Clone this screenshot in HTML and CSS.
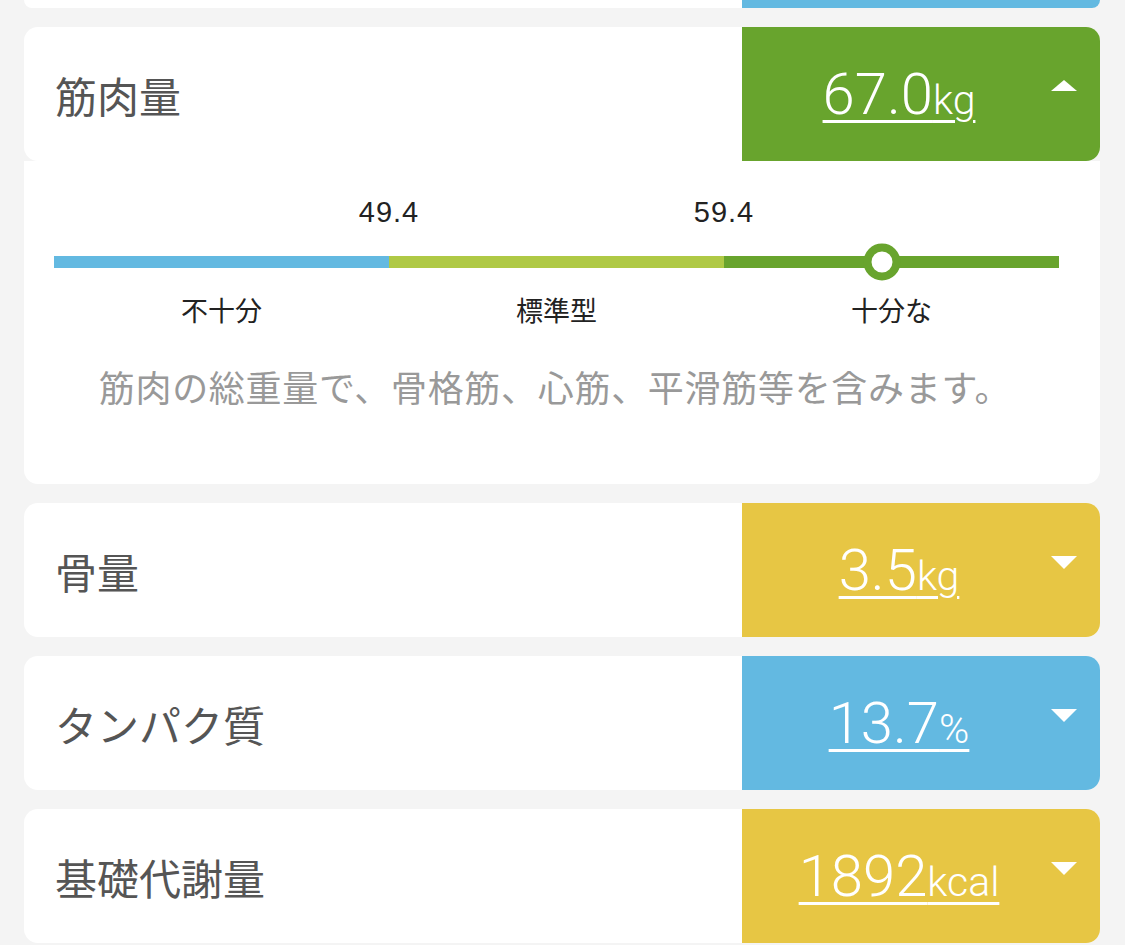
FILE: index.html
```html
<!DOCTYPE html>
<html lang="ja">
<head>
  <meta charset="UTF-8">
  <meta name="viewport" content="width=device-width, initial-scale=1.0">
  <title>体組成</title>
  <link rel="stylesheet" href="styles.css">
</head>
<body>
  <div id="list">
    <!-- bottom edge of the card scrolled above -->
    <div class="card tail">
      <div></div>
      <div class="panel blue"></div>
    </div>

    <div class="group">
      <div class="card">
        <div class="label">筋肉量</div>
        <div class="panel green">
          <span class="value"><span class="num">67.0</span><span class="unit">kg</span></span>
          <span class="arrow up"></span>
        </div>
      </div>
      <div class="detail">
        <div class="scale">
          <div class="limits">
            <span class="limit">49.4</span>
            <span class="limit">59.4</span>
          </div>
          <div class="bar">
            <span class="seg blue"></span>
            <span class="seg lime"></span>
            <span class="seg green"></span>
            <span class="marker" style="left: 82.4%;"></span>
          </div>
          <div class="ranges">
            <span>不十分</span>
            <span>標準型</span>
            <span>十分な</span>
          </div>
        </div>
        <p class="desc">筋肉の総重量で、骨格筋、心筋、平滑筋等を含みます。</p>
      </div>
    </div>

    <div class="card">
      <div class="label">骨量</div>
      <div class="panel yellow">
        <span class="value"><span class="num">3.5</span><span class="unit">kg</span></span>
        <span class="arrow down"></span>
      </div>
    </div>

    <div class="card">
      <div class="label">タンパク質</div>
      <div class="panel blue">
        <span class="value"><span class="num">13.7</span><span class="unit">%</span></span>
        <span class="arrow down"></span>
      </div>
    </div>

    <div class="card">
      <div class="label">基礎代謝量</div>
      <div class="panel yellow">
        <span class="value"><span class="num">1892</span><span class="unit">kcal</span></span>
        <span class="arrow down"></span>
      </div>
    </div>
  </div>
</body>
</html>
```

FILE: styles.css
```css
body {
  background-color: #f4f4f4;
  margin: 0;
  padding: 0;
  font-family: 'Noto Sans CJK JP', sans-serif;
}
#list {
  display: flex;
  flex-direction: column;
  gap: 19px;
  margin: 0 25px 0 24px;
}
.card {
  display: grid;
  grid-template-columns: 1fr 358px;
  height: 134px;
  background-color: #ffffff;
  border-radius: 14px;
  overflow: hidden;
}
.card.tail {
  height: 8px;
  border-radius: 0 0 14px 14px;
}
.label {
  display: flex;
  align-items: center;
  padding-left: 31px;
  font-size: 42px;
  color: #555555;
}
.panel {
  display: flex;
  align-items: center;
  padding: 0 23px 0 5px;
  color: #ffffff;
}
.panel.green { background-color: #68a42d; }
.panel.blue { background-color: #63b9e1; }
.panel.yellow { background-color: #e7c644; }
.value {
  flex: 1;
  text-align: center;
  font-family: 'Roboto', 'Liberation Sans', sans-serif;
  font-weight: 300;
  text-decoration: underline;
  text-decoration-thickness: 3px;
  text-underline-offset: 6px;
  white-space: nowrap;
}
.num {
  font-size: 58px;
}
.unit {
  font-size: 41px;
}
.arrow {
  width: 0;
  height: 0;
  border-left: 13px solid transparent;
  border-right: 13px solid transparent;
  margin-bottom: 16px;
}
.arrow.down {
  border-top: 13px solid #ffffff;
}
.arrow.up {
  border-bottom: 11px solid #ffffff;
  margin-bottom: 18px;
}
.detail {
  background-color: #ffffff;
  border-radius: 0 0 14px 14px;
  padding: 34px 41px 76px 30px;
}
.limits {
  display: grid;
  grid-template-columns: repeat(3, 1fr);
  font-family: 'Liberation Sans', sans-serif;
  font-size: 29px;
  line-height: 34px;
  letter-spacing: 1px;
  color: #222222;
}
.limit {
  justify-self: end;
  transform: translateX(50%);
}
.bar {
  position: relative;
  display: grid;
  grid-template-columns: repeat(3, 1fr);
  height: 12px;
  margin-top: 27px;
}
.seg.blue { background-color: #63b9e1; }
.seg.lime { background-color: #afc945; }
.seg.green { background-color: #68a42d; }
.marker {
  position: absolute;
  top: 50%;
  width: 21px;
  height: 21px;
  border: 8px solid #68a42d;
  border-radius: 50%;
  background-color: #ffffff;
  transform: translate(-50%, -50%);
}
.ranges {
  display: grid;
  grid-template-columns: repeat(3, 1fr);
  margin-top: 25px;
  text-align: center;
  font-size: 27px;
  line-height: 34px;
  color: #222222;
}
.desc {
  margin: 37px 0 0 -3px;
  text-align: center;
  font-size: 36px;
  line-height: 44px;
  letter-spacing: 0.7px;
  color: #999999;
}
```
